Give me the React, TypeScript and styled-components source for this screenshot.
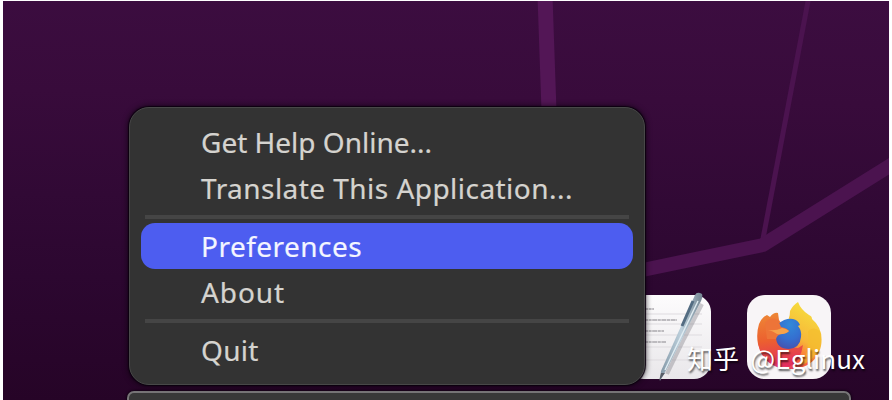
import React from 'react';
import styled, { createGlobalStyle } from 'styled-components';

const GlobalStyle = createGlobalStyle`
  * { box-sizing: border-box; }
  body { margin: 0; background: #fff; overflow: hidden; }
`;

const Page = styled.main`
  height: 400px;
  padding: 1px 3px 0;
`;

const Desktop = styled.section`
  position: relative;
  display: flex;
  flex-direction: column;
  justify-content: flex-end;
  height: 399px;
  overflow: hidden;
  background: linear-gradient(181deg, #3c0d40 0%, #380b3b 25%, #310935 50%, #2c0730 70%, #260427 100%);
`;

const Wallpaper = styled.svg`
  position: absolute;
  inset: 0;
`;

const AppRow = styled.div`
  position: relative;
  display: flex;
  justify-content: flex-end;
  gap: 36px;
  padding: 0 58px 12px 0;
`;

const AppIcon = styled.svg`
  display: block;
  width: 84px;
  height: 84px;
  overflow: visible;
`;

const Panel = styled.div`
  position: relative;
  height: 9px;
  margin: 0 38px 0 124px;
  background: #383838;
  border: 2px solid #777577;
  border-bottom: 0;
  border-radius: 7px 7px 0 0;
  box-shadow: 0 0 2px 1px #140216;
`;

const Menu = styled.nav`
  position: absolute;
  left: 126px;
  top: 106px;
  width: 516px;
  height: 278px;
  padding: 11px;
  background: #333;
  border: 1px solid #484848;
  border-radius: 20px;
  box-shadow: 0 0 1px 1px #0c010f, 0 0 5px 2px rgba(8, 0, 10, 0.5);
`;

const MenuItem = styled.div<{ $active?: boolean; $spacing: number }>`
  display: flex;
  align-items: center;
  height: 46px;
  padding-left: 60px;
  border-radius: 14px;
  background: ${p => (p.$active ? '#4d5df0' : 'transparent')};
  color: ${p => (p.$active ? '#f4f5ff' : '#d5d3cf')};
  font: 400 28px/46px 'Noto Sans', sans-serif;
  -webkit-text-stroke: 0.2px currentColor;
  letter-spacing: ${p => p.$spacing}px;
  white-space: nowrap;
`;

const Separator = styled.hr`
  height: 4px;
  margin: 4px;
  border: 0;
  background: #454545;
`;

const Watermark = styled.div`
  position: absolute;
  left: 684px;
  top: 339px;
  color: #fff;
  font: 400 26px/36px 'Noto Sans CJK SC', sans-serif;
  letter-spacing: 0.1px;
  word-spacing: 5.5px;
  white-space: nowrap;
  text-shadow: 1px 2px 2px rgba(0, 0, 0, 0.65);
`;

const TextEditorIcon = () => (
  <AppIcon viewBox="0 0 84 84">
    <defs>
      <linearGradient id="paper" x2="0" y2="1">
        <stop offset="0" stopColor="#fdfcfd" />
        <stop offset="1" stopColor="#e9e7ea" />
      </linearGradient>
      <linearGradient id="pen">
        <stop offset="0" stopColor="#8297a6" />
        <stop offset=".5" stopColor="#bdd0dc" />
        <stop offset="1" stopColor="#758693" />
      </linearGradient>
    </defs>
    <rect width="84" height="84" rx="17" fill="url(#paper)" />
    <path d="M15 19H75M15 29H75M15 40H75M15 52H75M15 65H75" stroke="#dedbdf" />
    <path d="M16 14H27M16 25H50M16 36H37M16 47H39" stroke="#bdbbbf" strokeWidth="1.8" strokeDasharray="5 .6 3 .6" />
    <path d="M75 9L57 44 40 79" stroke="#827f86" strokeOpacity=".4" strokeWidth="4" fill="none" />
    <path d="M68 0Q70-4 75-1Q76 1 74 6L41 72 33 86 34 76Z" fill="url(#pen)" />
    <path d="M66 6L55 31" stroke="#536c82" strokeWidth="3" />
    <path d="M71 6L38 75" stroke="#e1edf3" strokeWidth="1.4" />
    <path d="M34 78L32 86 38 78Z" fill="#575d67" />
  </AppIcon>
);

const FirefoxIcon = () => (
  <AppIcon viewBox="0 0 84 84">
    <defs>
      <linearGradient id="flame" x1=".85" y1="0" x2=".3" y2="1">
        <stop offset="0" stopColor="#f6e33f" />
        <stop offset=".5" stopColor="#f7b638" />
        <stop offset=".75" stopColor="#fa653b" />
        <stop offset="1" stopColor="#df3175" />
      </linearGradient>
      <linearGradient id="fox" x1=".3" y1="0" x2=".4" y2="1">
        <stop offset="0" stopColor="#ee8736" />
        <stop offset=".5" stopColor="#ec602f" />
        <stop offset="1" stopColor="#e22e60" />
      </linearGradient>
      <radialGradient id="globe" cx=".55" cy=".2" r=".8">
        <stop offset="0" stopColor="#3289d8" />
        <stop offset=".6" stopColor="#346fd0" />
        <stop offset="1" stopColor="#4554b0" />
      </radialGradient>
    </defs>
    <rect width="84" height="84" rx="18" fill="#f8f5f7" />
    <path d="M38 30Q43 24 43 16Q46 10 51 7Q54 15 62 20Q65 21 65 24Q77 34 74 51C71 65 60 74 43 74C25 74 12 63 11 46L34 52Z" fill="url(#flame)" />
    <path d="M61 36Q66 31 73 36Q76 47 71 56Q65 67 54 70Q63 57 61 36Z" fill="#f4bd2c" fillOpacity=".65" />
    <path d="M12 29Q15 22 20 20L23 22Q27 17 31 18L32 25Q38 32 40 45Q42 53 51 53L56 50Q54 66 42 72Q16 70 11 49Q9 39 12 29Z" fill="url(#fox)" />
    <path d="M31 29Q38 23 46 24Q51 25 53 30L51 31Q55 36 54 42Q53 53 42 54Q30 54 29 43Z" fill="url(#globe)" />
    <path d="M18 28Q23 21 31 25L34 32Q40 33 42 36Q40 38 34 39Q30 40 29 44L20 44Z" fill="#ed7438" />
    <path d="M21 35Q29 36 35 33Q40 34 42 36Q38 40 30 39Q26 36 21 35Z" fill="#f6a34b" />
  </AppIcon>
);

export default function App() {
  return (
    <>
      <GlobalStyle />
      <Page>
        <Desktop>
          <Wallpaper width="886" height="399">
            <g fill="none" stroke="#4b134f">
              <path d="M542-5L546 110" stroke="#531656" strokeWidth="15" />
              <path d="M806-5L759 243" strokeWidth="5" />
              <path d="M630 271L760 244 896 159" strokeWidth="14" />
            </g>
          </Wallpaper>
          <AppRow>
            <TextEditorIcon />
            <FirefoxIcon />
          </AppRow>
          <Panel />
          <Menu>
            <MenuItem $spacing={0}>Get Help Online...</MenuItem>
            <MenuItem $spacing={0.46}>Translate This Application...</MenuItem>
            <Separator />
            <MenuItem $active $spacing={0.48}>Preferences</MenuItem>
            <MenuItem $spacing={0.9}>About</MenuItem>
            <Separator />
            <MenuItem $spacing={0.3}>Quit</MenuItem>
          </Menu>
          <Watermark>知乎 @Eglinux</Watermark>
        </Desktop>
      </Page>
    </>
  );
}
